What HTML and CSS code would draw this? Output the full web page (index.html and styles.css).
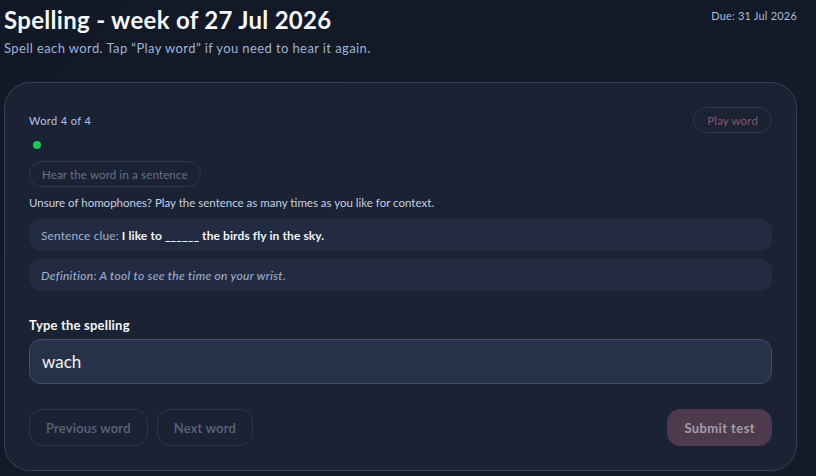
FILE: index.html
```html
<!DOCTYPE html>
<html lang="en">
<head>
    <meta charset="UTF-8">
    <meta name="viewport" content="width=device-width, initial-scale=1.0">
    <title>Spelling test</title>
    <link rel="stylesheet" href="styles.css">
</head>
<body>
    <div class="page">
        <header class="top">
            <div>
                <h1 class="title">Spelling - week of 27 Jul 2026</h1>
                <p class="subtitle">Spell each word. Tap “Play word” if you need to hear it again.</p>
            </div>
            <div class="due">Due: 31 Jul 2026</div>
        </header>

        <section class="card">
            <div class="card-head">
                <span class="counter">Word 4 of 4</span>
                <button class="pill pill-play" type="button">Play word</button>
            </div>

            <span class="dot"></span>

            <div>
                <button class="pill pill-hear" type="button">Hear the word in a sentence</button>
            </div>

            <p class="hint">Unsure of homophones? Play the sentence as many times as you like for context.</p>

            <div class="clue">Sentence clue: <strong>I like to ______ the birds fly in the sky.</strong></div>
            <div class="clue clue-def"><em>Definition: A tool to see the time on your wrist.</em></div>

            <label class="field-label" for="spelling">Type the spelling</label>
            <input class="field" type="text" id="spelling" value="wach">

            <div class="actions">
                <button class="btn" type="button">Previous word</button>
                <button class="btn" type="button">Next word</button>
                <button class="btn btn-submit" type="button">Submit test</button>
            </div>
        </section>
    </div>
</body>
</html>
```

FILE: styles.css
```css
html, body {
    margin: 0;
    padding: 0;
}

body {
    font-family: Lato, "Noto Sans", sans-serif;
    background: linear-gradient(135deg, #121826 0%, #141b29 100%);
    color: #e8edf6;
    height: 476px;
    overflow: hidden;
}

.page {
    width: 793px;
    padding: 5px 0 0 4px;
}

.top {
    display: flex;
    justify-content: space-between;
    align-items: flex-start;
}

.title {
    margin: 0;
    font-size: 24px;
    line-height: 30px;
    font-weight: 700;
    color: #f4f7fc;
    letter-spacing: 0.3px;
}

.subtitle {
    margin: 4px 0 0;
    font-size: 13px;
    line-height: 18px;
    color: #9fb3d6;
    letter-spacing: 0.4px;
}

.due {
    font-size: 11px;
    line-height: 14px;
    margin-top: 4px;
    color: #a9bad8;
    letter-spacing: 0.2px;
}

.card {
    margin-top: 25px;
    width: 743px;
    padding: 24px;
    border: 1px solid #364158;
    border-radius: 26px;
    background: #1b2234;
    display: flex;
    flex-direction: column;
}

.card-head {
    display: flex;
    justify-content: space-between;
    align-items: center;
}

.counter {
    font-size: 11px;
    color: #b3c4e0;
    letter-spacing: 0.4px;
}

.pill {
    font-family: inherit;
    background: transparent;
    border: 1px solid #2d374d;
    border-radius: 13px;
    height: 26px;
    padding: 0 12px;
    font-size: 11.5px;
    letter-spacing: 0.15px;
}

.pill-play {
    color: #87566a;
    padding: 0 13px;
}

.pill-hear {
    color: #6a7488;
}

.dot {
    width: 8px;
    height: 8px;
    border-radius: 50%;
    background: #22c55e;
    margin: 8px 0 12px 4px;
}

.hint {
    margin: 9px 0 9px;
    font-size: 11.5px;
    line-height: 14px;
    color: #c6d0e2;
}

.clue {
    background: #222b40;
    border-radius: 12px;
    height: 32px;
    display: flex;
    align-items: center;
    padding: 0 12px;
    font-size: 12px;
    color: #9fb0cc;
    margin-bottom: 8px;
    letter-spacing: 0.1px;
}

.clue strong {
    color: #f1f4fa;
    margin-left: 3px;
}

.clue-def {
    color: #a3b6d6;
    letter-spacing: 0.3px;
}

.field-label {
    margin-top: 18px;
    font-size: 13px;
    line-height: 16px;
    font-weight: 700;
    color: #f4f6fb;
    letter-spacing: 0.2px;
}

.field {
    margin-top: 6px;
    height: 45px;
    box-sizing: border-box;
    width: 100%;
    border: 1px solid #434e68;
    border-radius: 12px;
    background: #273149;
    padding: 0 12px;
    font-family: inherit;
    font-size: 17px;
    color: #f2f5fb;
    outline: none;
}

.actions {
    margin-top: 25px;
    display: flex;
    gap: 9px;
}

.btn {
    font-family: inherit;
    height: 37px;
    padding: 0 16px;
    border: 1px solid #2c364b;
    border-radius: 13px;
    background: transparent;
    color: #5c6679;
    font-size: 13px;
    font-weight: 600;
    letter-spacing: 0.2px;
}

.btn-submit {
    margin-left: auto;
    padding: 0 16px;
    border-color: #4e3a4c;
    background: #4e3a4c;
    color: #a29dab;
    font-weight: 700;
    letter-spacing: 0.4px;
}
```
